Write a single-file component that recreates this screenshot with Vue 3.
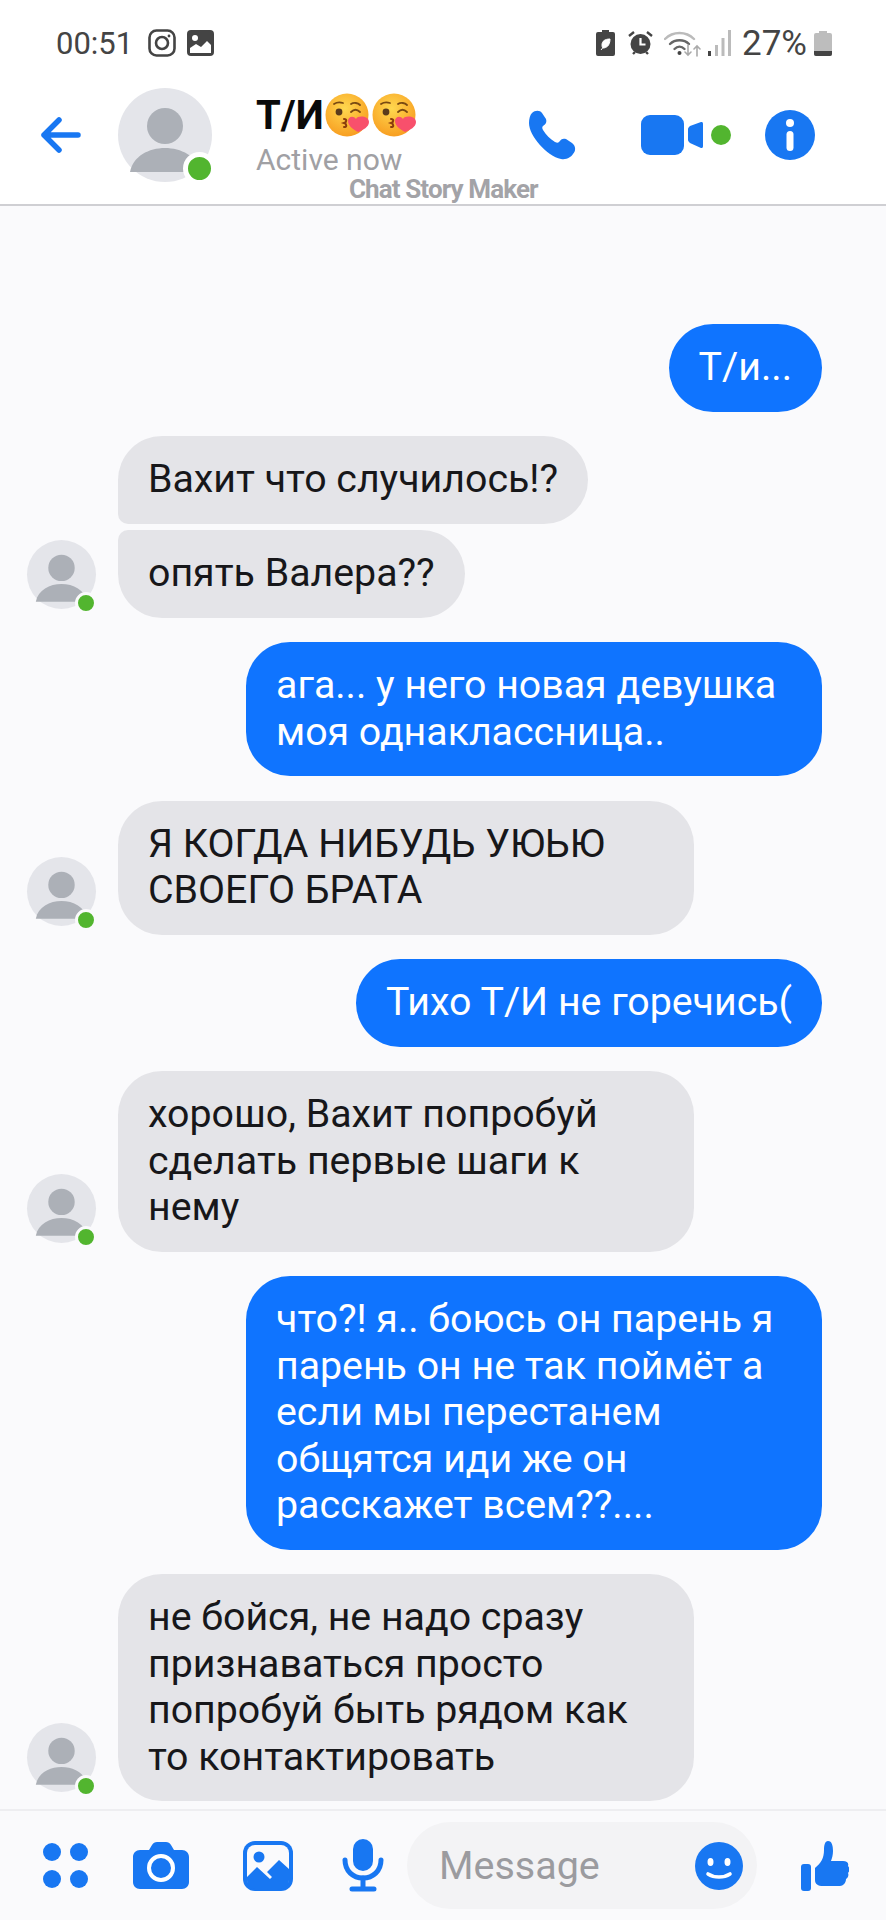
<template>
  <div class="screen">
    <div class="status">
      <span class="time">00:51</span>
      <svg class="st-insta" width="28" height="28" viewBox="0 0 28 28" fill="none" stroke="#444" stroke-width="2.6">
        <rect x="1.5" y="1.5" width="25" height="25" rx="7" />
        <circle cx="14" cy="14" r="6" />
        <circle cx="21" cy="7" r="1.4" fill="#444" stroke="none" />
      </svg>
      <svg class="st-pic" width="27" height="26" viewBox="0 0 27 26">
        <rect width="27" height="26" rx="4" fill="#444" />
        <circle cx="8" cy="8" r="3" fill="#fff" />
        <path d="M3 23v-5l6-4 5 3 6-6 4 4v8z" fill="#fff" />
      </svg>
      <span class="st-space"></span>
      <svg width="19" height="26" viewBox="0 0 19 26">
        <path d="M6 0h7v2h4a2 2 0 0 1 2 2v20a2 2 0 0 1-2 2H2a2 2 0 0 1-2-2V4a2 2 0 0 1 2-2h4z" fill="#444" />
        <path d="M14 9c-5 0-8 2-8 6 0 1 0 2 1 3 3 0 7-2 7-9zM5 20l4-5" fill="#fff" stroke="#fff" stroke-width="1" />
      </svg>
      <svg class="st-alarm" width="25" height="26" viewBox="0 0 25 26">
        <circle cx="12.5" cy="14" r="10" fill="#444" />
        <path d="M1 6l5-4M24 6l-5-4M5 24l2-2M20 24l-2-2" stroke="#444" stroke-width="2.4" fill="none" />
        <path d="M12.5 8v6.5h5" stroke="#fff" stroke-width="2.2" fill="none" />
      </svg>
      <svg class="st-wifi" width="37" height="27" viewBox="0 0 37 27" fill="none" stroke-linecap="round">
        <path d="M1 9c8-8 21-8 29 0" stroke="#bbb" stroke-width="2.4" />
        <path d="M6 14c5-5 14-5 19 0" stroke="#666" stroke-width="2.4" />
        <path d="M10.5 19c3-3 7-3 10 0" stroke="#666" stroke-width="2.4" />
        <circle cx="15.5" cy="23" r="2" fill="#444" />
        <path d="M24 15v10m-3-3l3 3 3-3" stroke="#aaa" stroke-width="1.6" />
        <path d="M33 26V16m-3 3l3-3 3 3" stroke="#aaa" stroke-width="1.6" />
      </svg>
      <svg class="st-signal" width="23" height="26" viewBox="0 0 23 26">
        <rect x="0" y="21" width="3" height="5" fill="#444" />
        <rect x="7" y="15" width="3" height="11" fill="#bbb" />
        <rect x="13.5" y="8" width="3" height="18" fill="#bbb" />
        <rect x="20" y="0" width="3" height="26" fill="#bbb" />
      </svg>
      <span class="pct">27%</span>
      <svg width="18" height="25" viewBox="0 0 18 25">
        <path d="M5 0h8v2h3a2 2 0 0 1 2 2v19a2 2 0 0 1-2 2H2a2 2 0 0 1-2-2V4a2 2 0 0 1 2-2h3z" fill="#bdbdbd" />
        <path d="M0 20h18v3a2 2 0 0 1-2 2H2a2 2 0 0 1-2-2z" fill="#444" />
      </svg>
    </div>

    <header class="head">
      <svg class="back" width="40" height="36" viewBox="0 0 40 36" fill="none" stroke="#1877f2" stroke-width="5.5" stroke-linecap="round" stroke-linejoin="round">
        <path d="M18 3L3 18l15 15M3 18h34" />
      </svg>
      <div class="avatar big">
        <svg viewBox="0 0 94 94">
          <circle cx="47" cy="38" r="18" fill="#acb0b7" />
          <path d="M12 84c3-16 19-24 35-24s32 8 35 24z" fill="#acb0b7" />
        </svg>
        <i class="dot"></i>
      </div>
      <div class="who">
        <div class="name">
          Т/И
          <svg v-for="n in 2" :key="n" class="kiss" viewBox="0 0 44 44">
            <defs>
              <radialGradient :id="'face' + n" cx="45%" cy="35%" r="70%">
                <stop offset="0" stop-color="#ffd84f" />
                <stop offset="1" stop-color="#f79a1e" />
              </radialGradient>
            </defs>
            <circle cx="22" cy="22" r="21.5" :fill="'url(#face' + n + ')'" />
            <circle cx="14" cy="19" r="3.4" fill="#5a3a1c" />
            <path d="M9 11c3-2 6-2 9-1M26 11c3-2 7-1 9 1M26 19c3-3 6-3 9 0" stroke="#7a4a12" stroke-width="1.8" fill="none" stroke-linecap="round" />
            <path d="M19 26c3 0 3 3 0 4 3 1 3 4 0 4" stroke="#8a3d0c" stroke-width="2" fill="none" stroke-linecap="round" />
            <path d="M33 39c-6-3-10-7-10-11 0-4 5-6 8-2 2-4 13-3 13 3 0 5-6 8-11 10z" fill="#f8506c" />
          </svg>
        </div>
        <div class="active">Active now</div>
      </div>
      <svg class="phone" width="49" height="50" viewBox="0 0 49 50">
        <path d="M3 3C6 0 11 0 13 3l4 6c1 3 0 5-3 7-1 1-1 2 0 4 3 5 7 9 12 12 2 1 3 1 4 0 2-3 4-4 7-3l6 4c4 3 4 8 1 11-2 3-6 6-12 5C18 46 0 26 0 13 0 9 1 5 3 3z" fill="#1877f2" />
      </svg>
      <svg class="video" width="90" height="40" viewBox="0 0 90 40">
        <rect x="0" y="0" width="43" height="40" rx="9" fill="#1877f2" />
        <path d="M47 14c0-1 1-2 2-3l11-4c1 0 2 0 2 2v22c0 2-1 2-2 2l-11-5c-1-1-2-2-2-3z" fill="#1877f2" />
        <circle cx="80" cy="20" r="10" fill="#52b52f" />
      </svg>
      <svg class="info" width="50" height="50" viewBox="0 0 50 50">
        <circle cx="25" cy="25" r="25" fill="#1877f2" />
        <circle cx="25" cy="13" r="4" fill="#fff" />
        <rect x="21.5" y="21" width="7" height="20" rx="3.5" fill="#fff" />
      </svg>
      <span class="mark">Chat Story Maker</span>
    </header>

    <main class="chat">
      <div
        v-for="(m, i) in messages"
        :key="i"
        class="row"
        :class="[m.me ? 'me' : 'them', { tight: m.tight }]"
      >
        <div v-if="!m.me" class="side">
          <div v-if="m.avatar" class="avatar small">
            <svg viewBox="0 0 94 94">
              <circle cx="47" cy="38" r="18" fill="#acb0b7" />
              <path d="M12 84c3-16 19-24 35-24s32 8 35 24z" fill="#acb0b7" />
            </svg>
            <i class="dot"></i>
          </div>
        </div>
        <div class="bubble" :class="m.shape">{{ m.text }}</div>
      </div>
    </main>

    <footer class="bar">
      <svg class="b-apps" width="46" height="46" viewBox="0 0 46 46" fill="#1877f2">
        <circle cx="9" cy="9" r="9" /><circle cx="36" cy="9" r="9" />
        <circle cx="9" cy="36" r="9" /><circle cx="36" cy="36" r="9" />
      </svg>
      <svg class="b-cam" width="56" height="47" viewBox="0 0 56 47">
        <path d="M7 8h9l3-5c1-2 3-3 5-3h9c2 0 4 1 5 3l3 5h8c4 0 7 3 7 7v25c0 4-3 7-7 7H7c-4 0-7-3-7-7V15c0-4 3-7 7-7z" fill="#1877f2" />
        <circle cx="28" cy="26" r="12" fill="none" stroke="#fff" stroke-width="4" />
      </svg>
      <svg class="b-pic" width="50" height="50" viewBox="0 0 50 50">
        <rect width="50" height="50" rx="12" fill="#1877f2" />
        <rect x="4" y="4" width="42" height="42" rx="8" fill="#fafafc" />
        <circle cx="16" cy="16" r="5.5" fill="#1877f2" />
        <path d="M4 36l10-10 13 12 2-2-5-5 12-12 10 9v11c0 5-3 9-8 9H12c-5 0-8-4-8-9z" fill="#1877f2" />
      </svg>
      <svg class="b-mic" width="42" height="53" viewBox="0 0 42 53">
        <rect x="11" y="0" width="20" height="32" rx="10" fill="#1877f2" />
        <path d="M3 21c0 11 8 18 18 18s18-7 18-18" fill="none" stroke="#1877f2" stroke-width="5" stroke-linecap="round" />
        <path d="M21 39v11M10 50h22" stroke="#1877f2" stroke-width="5" stroke-linecap="round" />
      </svg>
      <div class="input">
        <span class="ph">Message</span>
        <svg width="48" height="48" viewBox="0 0 48 48">
          <circle cx="24" cy="24" r="24" fill="#1877f2" />
          <ellipse cx="15.5" cy="20" rx="3" ry="4" fill="#fff" />
          <ellipse cx="32.5" cy="20" rx="3" ry="4" fill="#fff" />
          <path d="M13 32c6 4 16 4 22 0" stroke="#fff" stroke-width="3.6" fill="none" stroke-linecap="round" />
        </svg>
      </div>
      <svg class="b-like" width="48" height="50" viewBox="0 0 48 50">
        <rect x="0" y="23" width="10" height="27" rx="3" fill="#1877f2" />
        <path d="M14 27c6-5 9-10 9-18 0-5 1-9 4-9 4 0 5 5 5 10 0 4-1 7-2 10h12c4 0 6 2 5 5 2 2 2 5 0 7 1 2 0 5-2 6 0 4-3 7-6 7H22c-5 0-8-2-8-6z" fill="#1877f2" />
      </svg>
    </footer>
  </div>
</template>

<script setup>
const messages = [
  { me: true, text: 'Т/и...' },
  { text: 'Вахит что случилось!?', shape: 'first' },
  { text: 'опять Валера??', shape: 'last', avatar: true, tight: true },
  { me: true, text: 'ага... у него новая девушка моя однаклассница..' },
  { text: 'Я КОГДА НИБУДЬ УЮЬЮ СВОЕГО БРАТА', avatar: true },
  { me: true, text: 'Тихо Т/И не горечись(' },
  { text: 'хорошо, Вахит попробуй сделать первые шаги к нему', avatar: true },
  { me: true, text: 'что?! я.. боюсь он парень я парень он не так поймёт а если мы перестанем общятся иди же он расскажет всем??....' },
  { text: 'не бойся, не надо сразу признаваться просто попробуй быть рядом как то контактировать', avatar: true }
]
</script>

<style>
body {
  margin: 0;
  background: #fafafc;
}
</style>

<style scoped>
.screen {
  width: 886px;
  height: 1920px;
  display: flex;
  flex-direction: column;
  overflow: hidden;
  background: #fafafc;
  font-family: Roboto, "Liberation Sans", sans-serif;
}
.status {
  height: 86px;
  flex: none;
  display: flex;
  align-items: center;
  padding: 0 54px 0 56px;
  box-sizing: border-box;
  background: #fff;
  color: #444;
  font-size: 31px;
}
.st-insta { margin-left: 15px; }
.st-pic { margin-left: 11px; }
.st-space { flex: 1; }
.st-alarm { margin-left: 13px; }
.st-wifi { margin-left: 11px; }
.st-signal { margin-left: 7px; }
.pct { margin: 0 7px 0 11px; font-size: 35px; }

.head {
  position: relative;
  height: 120px;
  flex: none;
  display: flex;
  align-items: center;
  padding: 0 0 20px 41px;
  box-sizing: border-box;
  background: #fff;
  border-bottom: 2px solid #cfcfd3;
}
.back { margin-right: 37px; }
.avatar {
  position: relative;
  flex: none;
  border-radius: 50%;
  background: #e4e5ea;
}
.avatar svg { display: block; width: 100%; height: 100%; }
.avatar.big { width: 94px; height: 94px; }
.avatar.small { width: 69px; height: 69px; }
.dot {
  position: absolute;
  right: -4px;
  bottom: -3px;
  width: 23px;
  height: 23px;
  border-radius: 50%;
  background: #52b52f;
  border: 5px solid #fff;
}
.avatar.small .dot {
  width: 16px;
  height: 16px;
  border-width: 3px;
  border-color: #fafafc;
  right: -1px;
  bottom: -5px;
}
.who { margin-left: 44px; width: 273px; }
.name {
  display: flex;
  align-items: center;
  height: 44px;
  font-size: 40px;
  font-weight: 700;
  color: #0a0a0a;
}
.kiss { width: 44px; height: 44px; margin-left: 1px; margin-right: 2px; }
.active {
  margin-top: 6px;
  font-size: 30px;
  line-height: 34px;
  color: #a0a0a4;
}
.phone { margin-left: 0; margin-right: 63px; }
.video { margin-right: 34px; }
.mark {
  position: absolute;
  left: 349px;
  top: 89px;
  font-size: 26px;
  line-height: 28px;
  font-weight: 700;
  letter-spacing: -0.9px;
  color: #a3a3a7;
}

.chat {
  flex: 1;
  min-height: 0;
  overflow: hidden;
  display: flex;
  flex-direction: column;
  padding: 118px 64px 0 27px;
}
.row { display: flex; flex: none; margin-bottom: 24.5px; }
.row.tight { margin-top: -18px; }
.row.me { justify-content: flex-end; }
.row.them { align-items: flex-end; }
.side { width: 69px; margin-right: 22px; flex: none; padding-bottom: 9px; }
.bubble {
  max-width: 576px;
  box-sizing: border-box;
  padding: 20px 30px 21px;
  border-radius: 44px;
  font-size: 39.3px;
  line-height: 46.5px;
  color: #17171a;
  background: #e4e4e8;
}
.me .bubble { background: #0f74ff; color: #fff; }
.bubble.first { border-bottom-left-radius: 10px; }
.bubble.last { border-top-left-radius: 10px; }

.bar {
  height: 111px;
  flex: none;
  display: flex;
  align-items: center;
  box-sizing: border-box;
  border-top: 2px solid #eeeef1;
  padding-left: 43px;
}
.b-cam { margin-left: 44px; }
.b-pic { margin-left: 54px; }
.b-mic { margin-left: 49px; }
.input {
  width: 350px;
  height: 87px;
  margin-left: 23px;
  display: flex;
  align-items: center;
  justify-content: space-between;
  box-sizing: border-box;
  padding: 0 14px 0 32px;
  border-radius: 44px;
  background: #f3f3f5;
}
.ph { font-size: 39.5px; color: #9b9b9f; }
.b-like { margin-left: 44px; }
</style>
